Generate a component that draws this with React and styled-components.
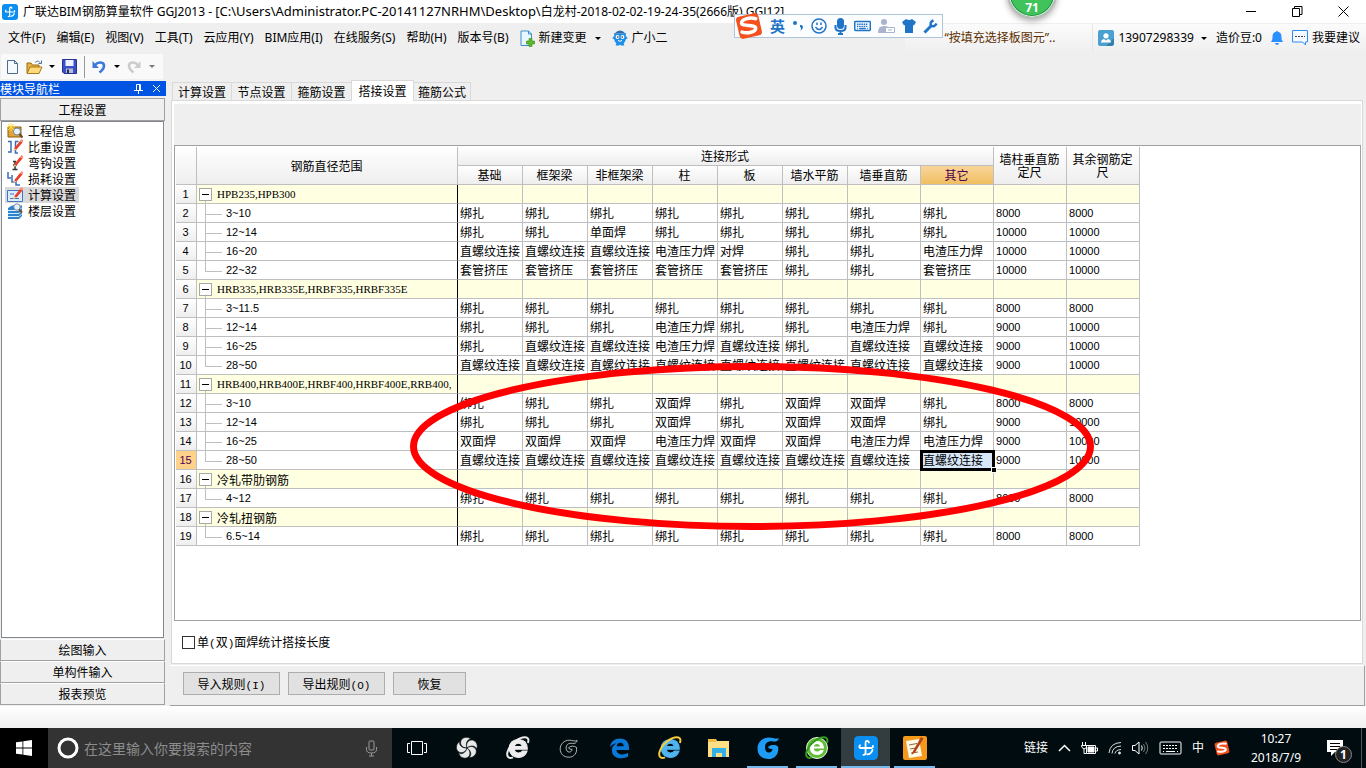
import React, { useState } from "react";
import styled, { createGlobalStyle, css } from "styled-components";

const GlobalStyle = createGlobalStyle`
  * { box-sizing: border-box; }
  body {
    margin: 0;
    background: #efefef;
    color: #000;
    font: 12px/16px "Noto Sans", "Noto Sans CJK SC", sans-serif;
  }
  button { font: inherit; color: inherit; margin: 0; padding: 0; border: 0; background: none; }
  svg { display: block; flex: none; }
`;

const Screen = styled.div`
  position: relative;
  display: flex;
  flex-direction: column;
  height: 100vh;
  overflow: hidden;
`;

/* ---------- title and menus ---------- */

const TitleBar = styled.header`
  display: flex;
  align-items: center;
  height: 23px;
  padding-left: 2px;
  background: #fff;
`;
const Title = styled.h1`
  flex: 1;
  margin: 0 0 0 5px;
  font-size: 12px;
  line-height: 22px;
  font-weight: 400;
  white-space: pre;
`;
const FilePath = styled.span`
  font-size: 13px;
`;
const WindowButton = styled.button`
  display: flex;
  align-items: center;
  justify-content: center;
  width: 46px;
  height: 20px;
`;

const MenuBar = styled.nav`
  display: flex;
  align-items: center;
  height: 30px;
  padding-left: 8px;
`;
const MenuItem = styled.button`
  display: flex;
  align-items: center;
  gap: 4px;
  margin-right: 11px;
  white-space: nowrap;
`;
const Spacer = styled.div`
  flex: 1;
`;
const Tip = styled.a`
  width: 188px;
  height: 28px;
  padding-left: 39px;
  border-right: 1px solid #e6e6e6;
  background: linear-gradient(#fbfbfb, #efefef);
  color: #5c2e00;
  line-height: 28px;
  text-decoration: none;
  white-space: nowrap;
`;
const Account = styled.div`
  display: flex;
  align-items: center;
  height: 28px;
  padding: 0 6px 0 5px;
  gap: 9px;
  background: linear-gradient(#fbfbfb, #efefef);
  white-space: nowrap;
`;
const AccountItem = styled.button`
  display: flex;
  align-items: center;
  gap: 4px;
`;
const Caret = styled.span`
  width: 5px;
  border: 3px solid transparent;
  border-top-color: ${(p) => (p.$muted ? "#777" : "#000")};
  border-bottom: 0;
  margin-left: ${(p) => p.$gap || 0}px;
`;

const ToolBar = styled.div`
  display: flex;
  align-items: center;
  align-self: flex-start;
  height: 25px;
  padding: 0 1px 0 5px;
  margin: 1px 0 2px 1px;
  background: #f9f9f9;
`;
const ToolButton = styled.button`
  display: flex;
  align-items: center;
  gap: 6px;
  margin-right: 7px;
`;
const ToolSeparator = styled.span`
  width: 1px;
  height: 22px;
  margin-right: 7px;
  background: #999;
`;

/* ---------- navigation panel ---------- */

const Body = styled.div`
  display: flex;
  flex: 1;
  min-height: 0;
`;
const Sidebar = styled.aside`
  display: flex;
  flex-direction: column;
  width: 166px;
  margin-right: 4px;
  padding-bottom: 1px;
  font-family: "Noto Sans CJK SC", sans-serif;
`;
const SidebarTitle = styled.div`
  display: flex;
  align-items: center;
  height: 15px;
  margin-bottom: 2px;
  padding-right: 5px;
  gap: 9px;
  background: #0054e3;
  color: #fff;
  line-height: 14px;
`;
const SectionButton = styled.button`
  width: 165px;
  height: ${(p) => (p.$top ? 23 : 22)}px;
  border: 1px solid #a0a0a0;
  border-top-color: ${(p) => (p.$top ? "#a0a0a0" : "#fff")};
  background: #efefef;
  line-height: 18px;
`;
const NavList = styled.ul`
  flex: 1;
  width: 163px;
  margin: 0 0 1px 1px;
  padding: 1px 3px;
  border: 1px solid #828790;
  background: #fff;
  list-style: none;
`;
const NavItem = styled.button`
  display: flex;
  align-items: center;
  gap: 5px;
  height: 16px;
  padding: 0 3px 0 2px;
  background: ${(p) => (p.$active ? "#d9d9d9" : "none")};
`;

/* ---------- work area ---------- */

const Main = styled.main`
  display: flex;
  flex: 1;
  flex-direction: column;
  min-width: 0;
  padding-right: 1px;
  font-family: "Noto Sans CJK SC", sans-serif;
`;
const Tabs = styled.div`
  display: flex;
  align-items: flex-end;
  height: 20px;
  margin-top: -1px;
  padding-left: 2px;
`;
const Tab = styled.button`
  width: ${(p) => (p.$active ? 63 : p.$last ? 57 : 60)}px;
  height: ${(p) => (p.$active ? 21 : 18)}px;
  margin-bottom: ${(p) => (p.$active ? -1 : 0)}px;
  margin-left: ${(p) => (p.$active && !p.$first ? -1 : 0)}px;
  border: 1px solid #d9d9d9;
  border-bottom: 0;
  border-left-width: ${(p) => (p.$active || p.$first ? 1 : 0)}px;
  background: ${(p) => (p.$active ? "#fff" : "#efefef")};
  line-height: 18px;
  z-index: 1;
`;
const Page = styled.section`
  display: flex;
  flex: 1;
  flex-direction: column;
  min-height: 0;
  margin: 0 2px 1px 1px;
  padding: 3px 1px 0 2px;
  border: 1px solid #d9d9d9;
  background: #fff;
`;
const Band = styled.div`
  height: 41px;
  background: #efefef;
`;
const GridPanel = styled.div`
  position: relative;
  flex: 1;
  min-height: 0;
  padding: 1px;
  border: 1px solid #a0a0a0;
  overflow: hidden;
`;
const CheckLabel = styled.label`
  display: flex;
  align-items: center;
  height: 42px;
  padding-left: 8px;
  gap: 2px;
`;
const CheckBox = styled.input`
  appearance: none;
  width: 13px;
  height: 13px;
  margin: 0;
  border: 1px solid #333;
  background: #fff;
  &:checked { background: #333; }
`;
const Half = styled.span`
  font: 11px "Liberation Mono", monospace;
`;
const Actions = styled.div`
  display: flex;
  gap: 8px;
  height: 41px;
  padding: 6px 0 0 13px;
  border: solid #a0a0a0;
  border-width: 0 1px 1px 0;
  border-top: 1px solid #fff;
`;
const ActionButton = styled.button`
  width: ${(p) => (p.$small ? 73 : 97)}px;
  height: 23px;
  border: 1px solid #adadad;
  background: #e1e1e1;
  line-height: 20px;
`;
const StatusStrip = styled.div`
  height: 22px;
  background: linear-gradient(#fff, #f0f0f0);
`;

/* ---------- grid ---------- */

const line = "1px solid #bfbfbf";

const Table = styled.table`
  table-layout: fixed;
  width: 964px;
  border-spacing: 0;
  font-size: 12px;
`;
const Head = styled.th`
  height: 19px;
  padding: 0 1px 1px 0;
  border-right: ${line};
  border-bottom: ${line};
  background: linear-gradient(#fff, #eee);
  font-weight: 400;
  line-height: ${(p) => (p.rowSpan ? 13 : 16)}px;
  ${(p) =>
    p.$current &&
    css`
      background: linear-gradient(#f9d59b, #f0bf60);
      color: #500050;
    `}
`;
const RowNumber = styled(Head)`
  font: 11px/16px "Liberation Sans", sans-serif;
  ${(p) => p.$current && "background: #ffd28c;"}
`;
const Cell = styled.td`
  height: 19px;
  padding: 0 0 0 2px;
  border-right: ${line};
  border-bottom: ${line};
  background: ${(p) => (p.$group ? "#ffffe1" : "#fff")};
  line-height: 16px;
  white-space: nowrap;
  ${(p) => p.$number && 'font: 11px/16px "Liberation Sans", sans-serif;'}
  ${(p) =>
    p.$selected &&
    css`
      position: relative;
      background: #d8e8f8;
      outline: 3px solid #000;
      outline-offset: -2px;
    `}
`;
const FillHandle = styled.span`
  position: absolute;
  right: -4px;
  bottom: -4px;
  width: 6px;
  height: 6px;
  border: 1px solid #fff;
  background: #000;
  z-index: 1;
`;
const NameCell = styled(Cell)`
  border-right-color: #000;
`;
const nameFonts = {
  latin: '11px/19px "Liberation Serif", serif',
  group: '12px/20px "Noto Sans CJK SC", sans-serif',
  range: '11px/18px "Liberation Sans", sans-serif',
};
const Name = styled.div`
  display: flex;
  height: 18px;
  gap: ${(p) => (p.$kind === "range" ? 4 : 5)}px;
  padding-left: ${(p) => (p.$kind === "range" ? 6 : 0)}px;
  font: ${(p) => nameFonts[p.$kind]};
`;
const Toggle = styled.span`
  display: flex;
  flex-direction: column;
  align-items: center;
  padding-top: 3px;
  &::after {
    content: "";
    width: 1px;
    flex: 1;
    background: #bfbfbf;
  }
`;
const ToggleButton = styled.button`
  display: flex;
  align-items: center;
  justify-content: center;
  width: 13px;
  height: 13px;
  border: 1px solid #a8a8a8;
  background: #fff;
  &::before {
    content: "";
    width: 7px;
    height: 1px;
    background: #000;
  }
`;
const Branch = styled.span`
  display: flex;
  flex-direction: column;
  width: 17px;
  &::before {
    content: "";
    height: 10px;
    border: solid #bfbfbf;
    border-width: 0 0 1px 1px;
  }
  &::after {
    content: "";
    flex: 1;
    border-left: ${(p) => (p.$last ? 0 : 1)}px solid #bfbfbf;
  }
`;
const Marking = styled.svg`
  position: absolute;
  left: 235px;
  top: 217px;
  pointer-events: none;
`;

/* ---------- task bar ---------- */

const TaskBar = styled.footer`
  display: flex;
  height: 40px;
  background: #000c0f;
  color: #fff;
`;
const StartButton = styled.button`
  display: flex;
  align-items: center;
  justify-content: center;
  width: 48px;
  background: #000;
`;
const SearchBox = styled.label`
  display: flex;
  align-items: center;
  width: 344px;
  padding: 0 14px 0 9px;
  gap: 5px;
  background: #333;
`;
const SearchInput = styled.input`
  flex: 1;
  min-width: 0;
  padding: 0;
  border: 0;
  outline: 0;
  background: none;
  color: #fff;
  font: 14px/20px "Noto Sans CJK SC", sans-serif;
  &::placeholder { color: #8c8c8c; opacity: 1; }
`;
const TaskButton = styled.button`
  display: flex;
  align-items: center;
  justify-content: center;
  width: ${(p) => (p.$pinned ? 51 : 49)}px;
  background: ${(p) => (p.$active ? "#333c3f" : "none")};
  box-shadow: ${(p) => (p.$open ? "inset 0 -2px #76b9ed" : "none")};
  border: solid transparent;
  border-width: 0 ${(p) => (p.$open && !p.$active ? 4 : 0)}px;
  background-clip: padding-box;
`;
const Tray = styled.div`
  display: flex;
  align-items: center;
  margin-left: auto;
  gap: 10px;
`;
const Clock = styled.time`
  width: 64px;
  margin-left: 4px;
  line-height: 19px;
  text-align: center;
`;
const NoticeButton = styled.button`
  position: relative;
  display: flex;
  align-items: center;
  justify-content: center;
  width: 54px;
  height: 40px;
  margin-left: -10px;
  border-right: 1px solid #555;
  margin-right: 4px;
`;
const NoticeCount = styled.span`
  position: absolute;
  left: 27px;
  top: 18px;
  width: 17px;
  height: 17px;
  border: 1px solid #888;
  border-radius: 50%;
  background: #222;
  font-weight: 700;
  line-height: 15px;
`;

/* ---------- floating things ---------- */

const ImeBar = styled.div`
  position: absolute;
  right: 423px;
  top: 14px;
  display: flex;
  align-items: center;
  height: 24px;
  padding: 0 4px 0 0;
  gap: 7px;
  border: 1px solid #b0c4da;
  background: #fcfdff;
  color: #1f74c8;
  font: 700 15px/22px "Noto Sans CJK SC", sans-serif;
`;
const SpeedBall = styled.div`
  position: absolute;
  right: 309px;
  top: -31px;
  display: flex;
  align-items: flex-end;
  justify-content: center;
  width: 50px;
  height: 50px;
  border: 2px solid #bdbdbd;
  border-radius: 50%;
  background: #3fc35a;
  box-shadow: inset 0 0 0 1px #e8f5ea, inset 0 0 0 2px #1f9140, 0 2px 6px #aaa;
  color: #fff;
  font: 700 12px/18px "Open Sans", sans-serif;
`;

/* ---------- icons ---------- */

const AppLogo = ({ size = 16 }) => (
  <svg width={size} height={size} viewBox="0 0 16 16">
    <rect width="16" height="16" rx="3" fill="#0a8ff0" />
    <path d="M10 4.300Q9.600 3.200 8.700 3.200 7.700 3.200 7.700 4.600V11.200Q7.700 12.600 6.300 12.600M4 6.200Q2.800 8 4.600 8H11.300Q13 8 12.600 6.600M12.300 9.300Q11.500 12 8.800 12.300" fill="none" stroke="#fff" strokeWidth="1.200" strokeLinecap="round" />
  </svg>
);

const SogouIcon = ({ size = 16 }) => (
  <svg width={size} height={size} viewBox="0 0 16 16">
    <rect x="1.500" y="1.500" width="13" height="13" rx="2" fill="#f4511e" transform="rotate(-13 8 8)" />
    <path d="M12.400 4.400C9 3 4.200 3.500 4 5.800c-.2 2 7.800 1.700 7.600 3.900-.2 2.300-5.200 2.500-8 1.200" fill="none" stroke="#fff" strokeWidth="2" strokeLinecap="round" transform="rotate(-8 8 8)" />
  </svg>
);

const NewFileIcon = () => (
  <svg width="13" height="16" viewBox="0 0 13 16">
    <path d="M1.500 1.500h7l3 3v10h-10z" fill="#f6faff" stroke="#4b6a92" />
    <path d="M8.500 1.500v3h3" fill="none" stroke="#4b6a92" />
  </svg>
);
const OpenIcon = () => (
  <svg width="17" height="16" viewBox="0 0 17 16">
    <path d="M1 14V4h4l1.500 2H13v3" fill="#e7b345" stroke="#9a6c10" />
    <path d="M1 14.500L4 8h12l-3 6.500z" fill="#ffda7c" stroke="#a87918" />
    <path d="M9 3.500c2-2 4-1.500 5 0M15.500 1.500v3h-3" fill="none" stroke="#4d6f9c" />
  </svg>
);
const SaveIcon = () => (
  <svg width="15" height="15" viewBox="0 0 15 15">
    <path d="M.5.5h14v14H2l-1.500-1.500z" fill="#3a50c8" stroke="#26348f" />
    <path d="M3.500 1h8v6h-8z" fill="#eef2ff" />
    <path d="M4 9.500h7V14H4z" fill="#b8bdd0" />
    <path d="M5 10.500h2V14H5z" fill="#222a60" />
  </svg>
);
const UndoIcon = ({ redo }) => (
  <svg width="14" height="14" viewBox="0 0 14 14">
    <g transform={redo ? "matrix(-1 0 0 1 14 0)" : undefined}>
      <path d="M3 5C6 1.500 12 1.500 12 6c0 2.500-2 4.500-4.500 6.500" fill="none" stroke={redo ? "#ccc" : "#3d78dd"} strokeWidth="2.600" />
      <path d="M.5 1V8h6.500z" fill={redo ? "#ccc" : "#3d78dd"} />
    </g>
  </svg>
);
const ChangeIcon = () => (
  <svg width="15" height="17" viewBox="0 0 15 17">
    <path d="M1 1h7.500l3 3v11.500H1z" fill="#eaf6ff" stroke="#3b8fc4" />
    <path d="M8.500 1v3h3" fill="none" stroke="#3b8fc4" />
    <path d="M9 8.500h3v2.500h2.500v3H12v2.500H9V14H6.500v-3H9z" fill="#5cba2b" stroke="#3c8a17" strokeWidth=".6" />
  </svg>
);
const RobotIcon = () => (
  <svg width="16" height="16" viewBox="0 0 16 16">
    <path d="M2 3l2 .5h8L14 3l-.3 3 2 2-2 1.500c-.3 2-1 3-2 3.500l.6 2.500H9L8 14.500l-1 1H3.700l.6-2.500c-1-.5-1.700-1.500-2-3.500L.3 8l2-2z" fill="#1d8fe8" />
    <path d="M2.500 3.500Q8-2.500 13.500 3.500z" fill="#2d6db0" />
    <circle cx="5.500" cy="7" r="1.900" fill="#fff" />
    <circle cx="10.500" cy="7" r="1.900" fill="#fff" />
    <circle cx="5.800" cy="7" r=".8" fill="#123" />
    <circle cx="10.200" cy="7" r=".8" fill="#123" />
    <path d="M6 10.500q2 1.500 4 0" fill="none" stroke="#fff" />
  </svg>
);
const UserIcon = () => (
  <svg width="16" height="16" viewBox="0 0 16 16">
    <rect width="16" height="16" rx="2" fill="#4aa0d0" />
    <path d="M8 16l8-8v6l-2 2z" fill="#3480ad" />
    <circle cx="8" cy="5.800" r="2.600" fill="#fff" />
    <path d="M3 12.500q0-3 3-3.500l2 1.500L10 9q3 .5 3 3.500z" fill="#fff" />
  </svg>
);
const BellIcon = () => (
  <svg width="12" height="16" viewBox="0 0 12 16">
    <path d="M6 .5l1 1.300c2.700.7 3.500 2.500 3.500 5.200 0 2 .3 3.500 1.500 5H0c1.200-1.500 1.500-3 1.500-5 0-2.700.8-4.500 3.500-5.200z" fill="#2a8fff" />
    <path d="M4 13h4q-.5 2-2 2t-2-2z" fill="#2a8fff" />
  </svg>
);
const ChatIcon = () => (
  <svg width="16" height="16" viewBox="0 0 16 16">
    <path d="M.5.500h15v11.500h-2v3l-3-3H.5z" fill="#f6faff" stroke="#2d8cf0" />
    <path d="M3 6.500h10" stroke="#345" strokeDasharray="2 1" />
  </svg>
);

const Pencil = () => (
  <g>
    <path d="M7 9.500l6-7.500 2.500 1.500-6 7z" fill="#e8402c" />
    <path d="M7 9.500l2.500 1L6 12.500z" fill="#f4c490" />
    <path d="M13 2l1.500-2 2 1.500-1 2z" fill="#ff8a75" />
  </g>
);
const navArt = {
  info: (
    <>
      <path d="M1 4h13v10H1z" fill="#e0a437" stroke="#8c5c12" />
      <circle cx="10" cy="8.500" r="3.500" fill="#e9f3ff" stroke="#6d87a8" />
      <path d="M12.500 11l3 3.500" stroke="#6d4b20" strokeWidth="2" />
      <path d="M4 0v8M0 4h8M1 1l6 6M7 1L1 7" stroke="#ffdc3c" />
    </>
  ),
  weight: (
    <>
      <path d="M1 2.500h3V13H1M8 2.500h3.500M8.500 2.500V14H11" fill="none" stroke="#3a6db8" strokeWidth="1.500" />
      <Pencil />
    </>
  ),
  hook: (
    <>
      <path d="M6 6.500h3M8 6v8M5.500 14.500h5M6 10h4" fill="none" stroke="#333" strokeWidth="1.500" />
      <Pencil />
    </>
  ),
  loss: (
    <>
      <path d="M1 1v6h3M5 4v7h4v3h4" fill="none" stroke="#3a6db8" strokeWidth="1.500" />
      <Pencil />
    </>
  ),
  calc: (
    <>
      <path d="M.5 3.500h15v11H.5z" fill="#dcecff" stroke="#3f78c0" />
      <path d="M3 7h4M3 11.500h9" stroke="#3f78c0" />
      <Pencil />
    </>
  ),
  floor: (
    <>
      <path d="M1 5l4-2.500h10V13l-3 3H1z" fill="#2e82cc" />
      <path d="M1 7.500h11l3-3M1 10.500h11l3-3M1 13.500h11l3-3" fill="none" stroke="#d8ecff" />
      <circle cx="10" cy="4" r="3.200" fill="#e9f3ff" stroke="#7c8ca0" />
      <path d="M12 6.500l3 3" stroke="#6d4b20" strokeWidth="2" />
    </>
  ),
};

const Edge = () => (
  <svg width="21" height="22" viewBox="0 0 22 22">
    <path d="M1 10C2 4 6 1 11.500 1 18 1 21 5.500 21 10.500V13H7.800c.3 3 3 4.700 6.200 4.700 2.200 0 4.200-.6 6-1.700v4c-2 1.200-4.400 1.800-7 1.800C6.500 21.800 3 18 3 13.500c0-3.500 2-6 5-7.500C5 6.500 2.500 7.800 1 10zm7-.8h7.400C15.300 6.800 14 5.600 11.800 5.600 9.700 5.600 8.400 7 8 9.200z" fill="#0a78d7" />
  </svg>
);
const Explorer = ({ body, ring, disc }) => (
  <svg width="24" height="24" viewBox="0 0 24 24">
    {disc && <circle cx="12" cy="12" r="10.500" fill={disc} stroke="#e9f6df" />}
    <path
      d="M12 5c4.500 0 7 3 7 7.600H8.800c.2 2 1.500 3 3.400 3 1.400 0 2.300-.6 2.900-1.500h3.700c-1 3.200-3.400 5-6.700 5-4.300 0-7.200-2.800-7.200-7S7.700 5 12 5zM8.900 10.500H15c-.3-1.500-1.300-2.500-3-2.500s-2.800 1-3.100 2.500z"
      fill={body}
      stroke={body}
      strokeWidth={disc ? 0 : 0.8}
      transform={disc ? undefined : "translate(-3 -3) scale(1.280)"}
    />
    <path d="M22 7c.8-3 .5-5-1.500-5.500C15 0 4 7 1.500 16c-1 4 .8 7.500 5.500 5.300" fill="none" stroke={ring} strokeWidth="2" />
  </svg>
);
const Glodon = ({ fill, stroke, size = 24 }) => (
  <svg width={size} height={size} viewBox="0 0 24 24">
    <path d="M23 2c-1 3-3 4-6 3.500-5-.7-8 1.500-8 6 0 3 1.500 5 4 5 2 0 3.300-1.500 3.500-3.500-2 0-3.500 0-4.500-2C15 8.500 19 8.500 22 10.500c1.500 7-3 12.500-9.500 12.500C5.500 23 1.500 18.500 1.500 12.500 1.500 6 7 1.500 13 1.500c4 0 7 2 10 .5z" fill={fill} stroke={stroke} />
  </svg>
);
const Fan = () => (
  <svg width="24" height="24" viewBox="0 0 24 24" fill="#e8e8e8">
    {[0, 72, 144, 216, 288].map((a) => (
      <path key={a} d="M12 12C7 12 4.500 8 6 4.500 8 .5 14 .5 16 3.500c-3-1-6 3.500-4 8.500z" transform={`rotate(${a} 12 12)`} stroke="#000c0f" strokeWidth=".6" />
    ))}
  </svg>
);
const Folder = () => (
  <svg width="22" height="20" viewBox="0 0 22 20">
    <path d="M0 1h8l1 2h12v16H0z" fill="#ffdf85" />
    <path d="M0 1h8v3H0z" fill="#f0bd45" />
    <path d="M4 10h14v9h-4v-4H8v4H4z" fill="#33b0e5" />
  </svg>
);
const NoteIcon = () => (
  <svg width="24" height="24" viewBox="0 0 24 24">
    <rect width="24" height="24" rx="2" fill="#f39a1d" />
    <path d="M3 5l13-2 3 17-13 2z" fill="#fffbe8" />
    <path d="M6 9l8-1.500M7 13l6-1M8 17l7-1" stroke="#8a6a40" />
    <path d="M9.500 16L18 1l2.500 1.500L12 16.500 8.500 19z" fill="#b5421b" />
  </svg>
);
const TaskView = () => (
  <svg width="20" height="16" viewBox="0 0 20 16" fill="none" stroke="#fff">
    <path d="M4.500 1.500h11v13h-11zM3 3.500H.5v9H3M17 3.500h2.500v9H17" />
  </svg>
);
const KeyboardIcon = ({ color, width = 23, height = 14, heavy }) => (
  <svg width={width} height={height} viewBox="0 0 23 14" fill="none" stroke={color} strokeWidth={heavy ? 2 : 1}>
    <rect x="1" y="1" width="21" height="12" rx="1" />
    <path d="M4 4.500h15M4 7.500h15" strokeDasharray="2 1" />
    <path d="M4 10.500h1M7 10.500h9M18 10.500h1" />
  </svg>
);
const MicIcon = ({ color, fill }) => (
  <svg width="13" height="17" viewBox="0 0 13 17" fill="none" stroke={color} strokeWidth={fill ? 2 : 1}>
    <rect x="4" y="1" width="5" height="9" rx={fill ? 2.5 : 1} fill={fill || "none"} />
    <path d="M1.500 7v2.500q0 3.500 5 3.500t5-3.500V7M6.500 13v3M4 16h5" />
  </svg>
);

/* ---------- data ---------- */

const menus = ["文件(F)", "编辑(E)", "视图(V)", "工具(T)", "云应用(Y)", "BIM应用(I)", "在线服务(S)", "帮助(H)", "版本号(B)"];

const navItems = [
  ["info", "工程信息"],
  ["weight", "比重设置"],
  ["hook", "弯钩设置"],
  ["loss", "损耗设置"],
  ["calc", "计算设置"],
  ["floor", "楼层设置"],
];

const tabNames = ["计算设置", "节点设置", "箍筋设置", "搭接设置", "箍筋公式"];
const columns = ["基础", "框架梁", "非框架梁", "柱", "板", "墙水平筋", "墙垂直筋", "其它"];
const widths = [21, 261, 65, 65, 65, 65, 65, 65, 73, 73, 73, 73];

const B = "绑扎";
const L = "直螺纹连接";
const D = "电渣压力焊";
const T = "套管挤压";
const S = "双面焊";

const rows = [
  { group: "HPB235,HPB300", latin: true },
  { name: "3~10", cells: [B, B, B, B, B, B, B, B, 8000, 8000] },
  { name: "12~14", cells: [B, B, "单面焊", B, B, B, B, B, 10000, 10000] },
  { name: "16~20", cells: [L, L, L, D, "对焊", B, B, D, 10000, 10000] },
  { name: "22~32", cells: [T, T, T, T, T, B, B, T, 10000, 10000] },
  { group: "HRB335,HRB335E,HRBF335,HRBF335E", latin: true },
  { name: "3~11.5", cells: [B, B, B, B, B, B, B, B, 8000, 8000] },
  { name: "12~14", cells: [B, B, B, D, B, B, D, B, 9000, 10000] },
  { name: "16~25", cells: [B, L, L, D, L, B, L, L, 9000, 10000] },
  { name: "28~50", cells: [L, L, L, L, L, L, L, L, 9000, 10000] },
  { group: "HRB400,HRB400E,HRBF400,HRBF400E,RRB400,", latin: true },
  { name: "3~10", cells: [B, B, B, S, B, S, S, B, 8000, 8000] },
  { name: "12~14", cells: [B, B, B, S, B, S, S, B, 9000, 10000] },
  { name: "16~25", cells: [S, S, S, D, S, S, D, D, 9000, 10000] },
  { name: "28~50", cells: [L, L, L, L, L, L, L, L, 9000, 10000] },
  { group: "冷轧带肋钢筋" },
  { name: "4~12", cells: [B, B, B, B, B, B, B, B, 8000, 8000] },
  { group: "冷轧扭钢筋" },
  { name: "6.5~14", cells: [B, B, B, B, B, B, B, B, 8000, 8000] },
];
const selected = { row: 14, col: 7 };

const GridRow = ({ row, index }) => {
  const next = rows[index + 1];
  const cells = row.cells || Array(10).fill("");
  const kind = row.latin ? "latin" : row.group ? "group" : "range";
  return (
    <tr>
      <RowNumber scope="row" $current={index === selected.row}>{index + 1}</RowNumber>
      <NameCell $group={!!row.group}>
        <Name $kind={kind}>
          {row.group ? (
            <Toggle><ToggleButton aria-label="折叠" /></Toggle>
          ) : (
            <Branch $last={!next || !!next.group} />
          )}
          {row.group || row.name}
        </Name>
      </NameCell>
      {cells.map((value, col) => {
        const isSelected = index === selected.row && col === selected.col;
        return (
          <Cell key={col} $group={!!row.group} $number={col > 7} $selected={isSelected}>
            {value}
            {isSelected && <FillHandle />}
          </Cell>
        );
      })}
    </tr>
  );
};

const App = () => {
  const [checked, setChecked] = useState(false);
  const [tab, setTab] = useState(3);

  return (
    <Screen>
      <GlobalStyle />
      <TitleBar>
        <AppLogo />
        <Title>
          广联达BIM钢筋算量软件 GGJ2013 - <FilePath>[C:\Users\Administrator.PC-20141127NRHM\Desktop\</FilePath>白龙村-2018-02-02-19-24-35(2666版).GGJ12]
        </Title>
        <WindowButton aria-label="最小化">
          <svg width="11" height="11"><path d="M0 5.500h10" stroke="#000" /></svg>
        </WindowButton>
        <WindowButton aria-label="还原">
          <svg width="11" height="11" fill="none" stroke="#000"><path d="M.5 2.500h7v8h-7zM2.500 2V.500h7.500v8H8" /></svg>
        </WindowButton>
        <WindowButton aria-label="关闭">
          <svg width="11" height="11"><path d="M.5.500l10 10M10.500.500l-10 10" stroke="#000" /></svg>
        </WindowButton>
      </TitleBar>

      <MenuBar>
        {menus.map((m) => <MenuItem key={m}>{m}</MenuItem>)}
        <MenuItem><ChangeIcon />新建变更<Caret $gap={4} /></MenuItem>
        <MenuItem><RobotIcon />广小二</MenuItem>
        <Spacer />
        <Tip href="#tip">“按填充选择板图元”..</Tip>
        <Account>
          <AccountItem><UserIcon />13907298339<Caret $gap={3} /></AccountItem>
          <span>造价豆:0</span>
          <AccountItem aria-label="消息"><BellIcon /></AccountItem>
          <AccountItem><ChatIcon />我要建议</AccountItem>
        </Account>
      </MenuBar>

      <ToolBar>
        <ToolButton aria-label="新建"><NewFileIcon /></ToolButton>
        <ToolButton aria-label="打开"><OpenIcon /><Caret /></ToolButton>
        <ToolButton aria-label="保存"><SaveIcon /></ToolButton>
        <ToolSeparator />
        <ToolButton aria-label="撤销"><UndoIcon /><Caret $gap={2} /></ToolButton>
        <ToolButton aria-label="重做"><UndoIcon redo /><Caret $muted $gap={2} /></ToolButton>
      </ToolBar>

      <Body>
        <Sidebar>
          <SidebarTitle>
            模块导航栏
            <Spacer />
            <svg width="9" height="10" fill="none" stroke="#fff"><path d="M2.500 6V.500h4V6M5.500 0v6M0 6.500h9M4.500 7v3" /></svg>
            <svg width="9" height="9"><path d="M1 1l7 7M8 1L1 8" stroke="#fff" /></svg>
          </SidebarTitle>
          <SectionButton $top>工程设置</SectionButton>
          <NavList>
            {navItems.map(([icon, label]) => (
              <li key={icon}>
                <NavItem $active={icon === "calc"}>
                  <svg width="16" height="16" viewBox="0 0 16 16">{navArt[icon]}</svg>
                  {label}
                </NavItem>
              </li>
            ))}
          </NavList>
          <SectionButton>绘图输入</SectionButton>
          <SectionButton>单构件输入</SectionButton>
          <SectionButton>报表预览</SectionButton>
        </Sidebar>

        <Main>
          <Tabs>
            {tabNames.map((name, i) => (
              <Tab key={name} $active={i === tab} $first={i === 0} $last={i === 4} onClick={() => setTab(i)}>{name}</Tab>
            ))}
          </Tabs>
          <Page>
            <Band />
            <GridPanel>
              <Table>
                <colgroup>
                  {widths.map((w, i) => <col key={i} width={w} />)}
                </colgroup>
                <thead>
                  <tr>
                    <Head rowSpan={2} />
                    <Head rowSpan={2}>钢筋直径范围</Head>
                    <Head colSpan={8}>连接形式</Head>
                    <Head rowSpan={2}>墙柱垂直筋<br />定尺</Head>
                    <Head rowSpan={2}>其余钢筋定<br />尺</Head>
                  </tr>
                  <tr>
                    {columns.map((c, i) => <Head key={c} $current={i === selected.col}>{c}</Head>)}
                  </tr>
                </thead>
                <tbody>
                  {rows.map((row, i) => <GridRow key={i} row={row} index={i} />)}
                </tbody>
              </Table>
              <Marking width="684" height="167">
                <ellipse cx="342" cy="83.500" rx="338.500" ry="80" fill="none" stroke="#f00" strokeWidth="7" />
              </Marking>
            </GridPanel>
            <CheckLabel>
              <CheckBox type="checkbox" checked={checked} onChange={(e) => setChecked(e.target.checked)} />
              <span>单<Half>(</Half>双<Half>)</Half>面焊统计搭接长度</span>
            </CheckLabel>
          </Page>
          <Actions>
            <ActionButton>导入规则<Half>(I)</Half></ActionButton>
            <ActionButton>导出规则<Half>(O)</Half></ActionButton>
            <ActionButton $small>恢复</ActionButton>
          </Actions>
        </Main>
      </Body>
      <StatusStrip />

      <TaskBar>
        <StartButton aria-label="开始">
          <svg width="16" height="16" fill="#fff"><path d="M0 2.300l6.500-.9v6.200H0zM7.300 1.300L16 0v7.600H7.300zM0 8.400h6.500v6.200L0 13.700zM7.300 8.400H16V16l-8.700-1.300z" /></svg>
        </StartButton>
        <SearchBox>
          <svg width="22" height="22"><circle cx="11" cy="11" r="9" fill="none" stroke="#fff" strokeWidth="3" /></svg>
          <SearchInput placeholder="在这里输入你要搜索的内容" aria-label="搜索" />
          <MicIcon color="#999" />
        </SearchBox>
        <TaskButton aria-label="任务视图"><TaskView /></TaskButton>
        <TaskButton $pinned aria-label="风扇"><Fan /></TaskButton>
        <TaskButton $pinned aria-label="浏览器"><Explorer body="#eee" ring="#eee" /></TaskButton>
        <TaskButton $pinned aria-label="广联达"><Glodon fill="none" stroke="#ddd" size={19} /></TaskButton>
        <TaskButton $pinned aria-label="Edge"><Edge /></TaskButton>
        <TaskButton aria-label="Internet Explorer"><Explorer body="#4fb4f0" ring="#f5cd3c" /></TaskButton>
        <TaskButton aria-label="文件资源管理器"><Folder /></TaskButton>
        <TaskButton $open aria-label="广联达云"><Glodon fill="#1e9cf5" stroke="none" /></TaskButton>
        <TaskButton $open aria-label="安全浏览器"><Explorer body="#fff" ring="#2f9a1c" disc="#62bd36" /></TaskButton>
        <TaskButton $open $active aria-label="钢筋算量"><AppLogo size={24} /></TaskButton>
        <TaskButton $open aria-label="便笺"><NoteIcon /></TaskButton>
        <Tray>
          <span>链接</span>
          <svg width="13" height="8" fill="none" stroke="#fff" strokeWidth="1.500"><path d="M1 7l5.500-5.500L12 7" /></svg>
          <svg width="17" height="13" viewBox="0 0 17 13" fill="none" stroke="#fff">
            <path d="M5.500 3.500h9v8h-9zM15 6h1.500v3H15M1.500 0v3M4.500 0v3M.5 3.500h5v2l-2.500 1.500-2-1.500zM3 7v4.500h2" />
            <path d="M7 5h6v5H7z" fill="#fff" />
          </svg>
          <svg width="14" height="14" fill="none" stroke="#ddd">
            <path d="M1 12Q2 2 13 1.500M4 12.500Q4.500 5.500 13 5M7 12.500Q7.500 9 13 8.500" />
            <circle cx="11.500" cy="12" r="1" fill="#fff" />
          </svg>
          <svg width="17" height="14" fill="none" stroke="#fff"><path d="M.5 4.500H3l4-3.500v12L3 9.500H.500zM9.500 4.500q1.500 2.500 0 5" /><path d="M11.500 3q3 4 0 8M13.500 1q4.500 6 0 12" stroke="#777" /></svg>
          <KeyboardIcon color="#fff" />
          <span>中</span>
          <SogouIcon />
          <Clock>10:27<br />2018/7/9</Clock>
          <NoticeButton aria-label="通知">
            <svg width="16" height="16"><path d="M0 0h16v12H8l-4 4v-4H0z" fill="#fff" /><path d="M3 3.500h10M3 6.500h10M3 9.500h7" stroke="#000" /></svg>
            <NoticeCount>1</NoticeCount>
          </NoticeButton>
        </Tray>
      </TaskBar>

      <SpeedBall>71</SpeedBall>
      <ImeBar>
        <SogouIcon size={28} />
        <span>英</span>
        <svg width="12" height="12" fill="#1f74c8"><circle cx="3" cy="3" r="2" /><path d="M8 5q3-.5 3 2t-3 4q1.500-2 1-3t-1-1z" /></svg>
        <svg width="16" height="16" fill="none" stroke="#1f74c8" strokeWidth="1.500"><circle cx="8" cy="8" r="7" /><path d="M4.500 9q3.500 5 7 0M6 4.500v2.500M10 4.500v2.500" /></svg>
        <MicIcon color="#1f74c8" fill="#1f74c8" />
        <KeyboardIcon color="#1f74c8" width={17} height={12} heavy />
        <svg width="17" height="15" fill="#aab4cc"><circle cx="6" cy="3" r="3" /><path d="M0 13q0-6 6-6 3 0 4 1v6H0z" /><path d="M7.500 8.500h9v5h-9zM10 11h4" fill="#fff" stroke="#aab4cc" /></svg>
        <svg width="14" height="14" fill="#1f74c8"><path d="M4 0q3 2 6 0l4 3-2 3.500-1-.5v8H3V6l-1 .500L0 3z" /></svg>
        <svg width="15" height="15" fill="none" stroke="#1f74c8"><path d="M1.500 13.500L8 7" strokeWidth="3" /><path d="M10.500 1.500q-4 1.500-2.500 5 3.500 2 5.500-2" strokeWidth="2.500" /></svg>
      </ImeBar>
    </Screen>
  );
};

export default App;
